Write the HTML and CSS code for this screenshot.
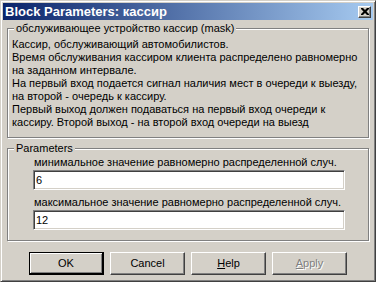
FILE: index.html
```html
<!DOCTYPE html>
<html>

<head>
    <meta charset="UTF-8">
    <title>Block Parameters: кассир</title>

    <link rel="stylesheet" href="styles.css">
</head>

<body>
<div class="window">
    <div class="titlebar">
        <span class="title">Block Parameters: кассир</span>
        <button class="close-button">
            <svg width="8" height="7" viewBox="0 0 8 7">
                <path d="M0 0h2l2 2 2-2h2v1l-2.5 2.5L8 6v1H6L4 5 2 7H0V6l2.5-2.5L0 1z" fill="#000"/>
            </svg>
        </button>
    </div>

    <div class="content">
        <fieldset class="group description">
            <legend>обслуживающее устройство кассир (mask)</legend>
            <p>
                Кассир, обслуживающий автомобилистов.<br>
                Время обслуживания кассиром клиента распределено равномерно<br>
                на заданном интервале.<br>
                На первый вход подается сигнал наличия мест в очереди к выезду,<br>
                на второй - очередь к кассиру.<br>
                Первый выход должен подаваться на первый вход очереди к<br>
                кассиру. Второй выход - на второй вход очереди на выезд
            </p>
        </fieldset>

        <fieldset class="group parameters">
            <legend>Parameters</legend>
            <div class="param-list">
                <label for="param-min">минимальное значение равномерно распределенной случ.</label>
                <input type="text" id="param-min" value="6">
                <label for="param-max">максимальное значение равномерно распределенной случ.</label>
                <input type="text" id="param-max" value="12">
            </div>
        </fieldset>

        <div class="button-row">
            <button class="btn default">OK</button>
            <button class="btn">Cancel</button>
            <button class="btn"><u>H</u>elp</button>
            <button class="btn" disabled><u>A</u>pply</button>
        </div>
    </div>
</div>
</body>

</html>
```

FILE: styles.css
```css
body {
    margin: 0;
    font-family: "Liberation Sans", Arial, sans-serif;
    font-size: 11px;
    line-height: 13px;
    color: #000;
}

.window {
    box-sizing: border-box;
    width: 376px;
    height: 282px;
    padding: 2px;
    background: #d4d0c8;
    border: 1px solid;
    border-color: #d4d0c8 #404040 #404040 #d4d0c8;
    box-shadow: inset 1px 1px #fff, inset -1px -1px #808080;
}

.titlebar {
    display: flex;
    align-items: center;
    justify-content: space-between;
    height: 17px;
    padding: 0 2px;
    background: linear-gradient(to right, #0a246a, #a6caf0);
}

.title {
    color: #fff;
    font-weight: bold;
    font-size: 13px;
}

.close-button {
    box-sizing: border-box;
    display: flex;
    align-items: center;
    justify-content: center;
    width: 13px;
    height: 12px;
    padding: 0;
    background: #d4d0c8;
    border: 1px solid;
    border-color: #fff #404040 #404040 #fff;
    box-shadow: inset -1px -1px #808080;
}

.content {
    padding: 2px 4px 0 4px;
}

/* etched group box */
.group {
    margin: 0;
    min-width: 0;
    border: 1px solid #808080;
    box-shadow: inset 1px 1px #fff, 1px 1px #fff;
}

.group legend {
    margin-left: 2px;
    padding: 0 2px;
    background: #d4d0c8;
}

.description {
    padding: 3px 4px 8px 4px;
}

.description p {
    margin: 0;
}

.parameters {
    margin-top: 4px;
    padding: 1px 4px 10px 4px;
}

.param-list {
    display: flex;
    flex-direction: column;
    margin-left: 21px;
    width: 312px;
}

.param-list label {
    padding-left: 1px;
}

.param-list input {
    box-sizing: border-box;
    height: 20px;
    margin: 1px 0 6px 0;
    padding: 1px 2px;
    font: inherit;
    background: #fff;
    border: 1px solid;
    border-color: #808080 #fff #fff #808080;
    box-shadow: inset 1px 1px #404040, inset -1px -1px #d4d0c8;
    outline: none;
}

.param-list input:last-child {
    margin-bottom: 0;
}

.button-row {
    display: flex;
    justify-content: center;
    gap: 6px;
    margin-top: 11px;
}

.btn {
    box-sizing: border-box;
    width: 75px;
    height: 23px;
    padding: 0;
    font: inherit;
    color: #000;
    background: #d4d0c8;
    border: 1px solid;
    border-color: #fff #404040 #404040 #fff;
    box-shadow: inset -1px -1px #808080;
}

.btn.default {
    border: 2px solid #000;
    border-width: 1px 2px 2px 1px;
    box-shadow: inset 1px 1px #fff, inset -1px -1px #808080;
}

.btn:disabled {
    color: #808080;
    text-shadow: 1px 1px #fff;
}
```
